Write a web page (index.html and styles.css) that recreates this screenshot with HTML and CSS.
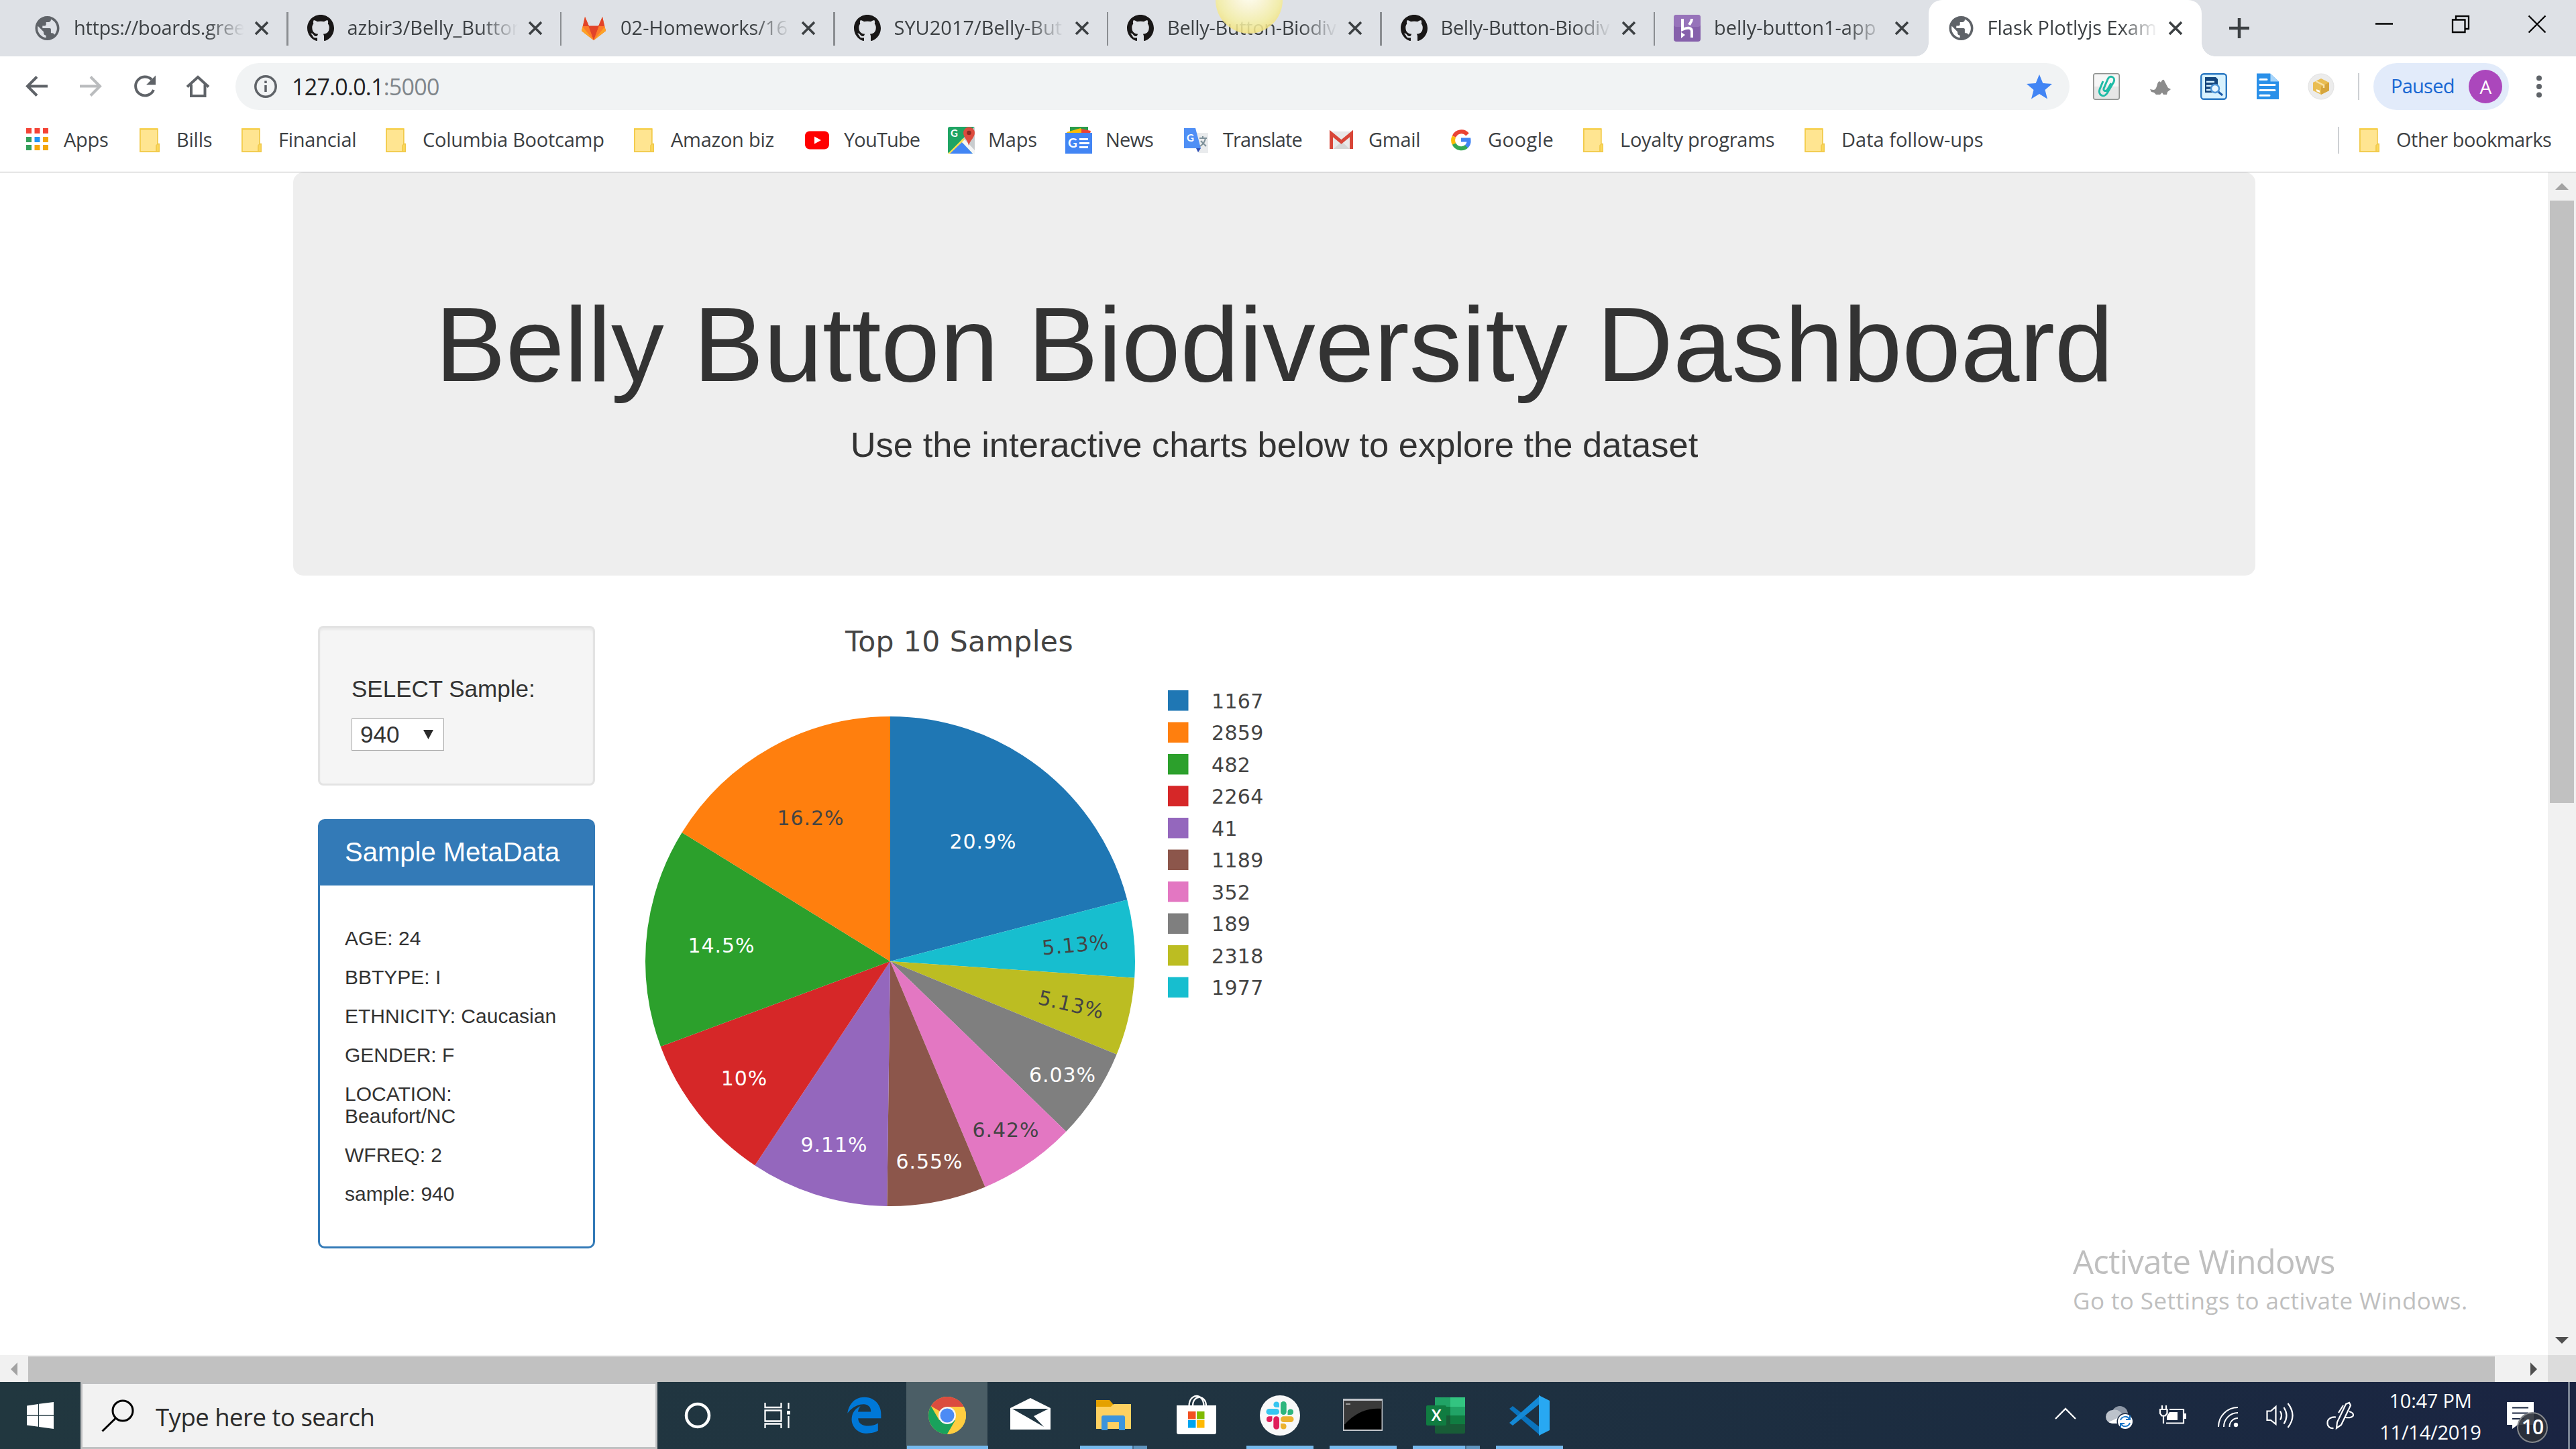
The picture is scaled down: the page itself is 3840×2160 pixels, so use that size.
FILE: index.html
```html
<!DOCTYPE html>
<html lang="en">
<head>
<meta charset="utf-8">
<title>Flask Plotlyjs Example</title>
<link rel="stylesheet" href="styles.css">
</head>
<body>
<svg class="defs" aria-hidden="true">
  <defs>
    <symbol id="globe" viewBox="0 0 40 40">
      <path transform="translate(-1.100 -1.600) scale(1.800)" fill="#5f6368" d="M12 2C6.480 2 2 6.480 2 12s4.480 10 10 10 10-4.480 10-10S17.520 2 12 2zm-1 17.930c-3.950-.49-7-3.850-7-7.930 0-.62.08-1.210.21-1.790L9 15v1c0 1.100.9 2 2 2v1.930zm6.900-2.540c-.26-.81-1-1.390-1.900-1.390h-1v-3c0-.55-.45-1-1-1H8v-2h2c.55 0 1-.45 1-1V7h2c1.100 0 2-.9 2-2v-.41c2.930 1.190 5 4.060 5 7.410 0 2.080-.8 3.970-2.100 5.390z"/>
    </symbol>
    <symbol id="github" viewBox="0 0 16 16">
      <path fill="#191717" d="M8 0C3.58 0 0 3.58 0 8c0 3.54 2.29 6.53 5.47 7.59.4.07.55-.17.55-.38 0-.19-.01-.82-.01-1.490-2.010.37-2.530-.49-2.690-.94-.09-.23-.48-.94-.82-1.130-.28-.15-.68-.52-.01-.53.63-.01 1.080.58 1.230.82.72 1.210 1.870.87 2.330.66.07-.52.28-.87.51-1.070-1.780-.2-3.640-.89-3.640-3.950 0-.87.31-1.590.82-2.150-.08-.2-.36-1.020.08-2.120 0 0 .67-.21 2.200.82.64-.18 1.320-.27 2-.27s1.360.09 2 .27c1.530-1.040 2.200-.82 2.200-.82.44 1.100.16 1.920.08 2.120.51.56.82 1.270.82 2.150 0 3.070-1.870 3.750-3.650 3.950.29.25.54.73.54 1.480 0 1.070-.01 1.930-.01 2.200 0 .21.15.46.55.38A8.010 8.010 0 0 0 16 8c0-4.420-3.580-8-8-8z"/>
    </symbol>
    <symbol id="close" viewBox="0 0 22 22">
      <path d="M2 2l18 18M20 2L2 20" stroke="#3c4043" stroke-width="3.600" fill="none"/>
    </symbol>
    <symbol id="folder" viewBox="0 0 40 40">
      <path d="M5 2h27.500v23H35v13H5z" fill="#fbd85c"/>
      <path d="M7 4.500h24V27l-2 3v6.500H7z" fill="#ffe591"/>
      <path d="M5.800 3.500h26v22h2.500v11.500H5.800zM30 37V27.500l2.500-2" fill="none" stroke="#f0c84a" stroke-width="1.400"/>
    </symbol>
  </defs>
</svg>

<div class="screen">
  <header class="tabstrip">
    <div class="tab"><svg class="fav"><use href="#globe"/></svg><span class="tab-title snug">https://boards.gree</span><svg class="tab-x"><use href="#close"/></svg></div>
    <div class="tab"><svg class="fav"><use href="#github"/></svg><span class="tab-title">azbir3/Belly_Button</span><svg class="tab-x"><use href="#close"/></svg></div>
    <div class="tab"><svg class="fav" viewBox="0 0 40 40"><path d="M20 38L2 24 7 3l6 14h14l6-14 5 21z" fill="#fc6d26"/><path d="M20 38L12 16.500h16z" fill="#e24329"/><path d="M20 38L2 24l2-7.500h8zM20 38l18-14-2-7.500h-8z" fill="#fc7b2a"/><path d="M20 38L2 24l1.500-6zM20 38l18-14-1.500-6z" fill="#fca326"/><path d="M4 17L7 3l6 14zM36 17L33 3l-6 14z" fill="#e24329"/></svg><span class="tab-title">02-Homeworks/16</span><svg class="tab-x"><use href="#close"/></svg></div>
    <div class="tab"><svg class="fav"><use href="#github"/></svg><span class="tab-title">SYU2017/Belly-But</span><svg class="tab-x"><use href="#close"/></svg></div>
    <div class="tab"><svg class="fav"><use href="#github"/></svg><span class="tab-title snug">Belly-Button-Biodiv</span><svg class="tab-x"><use href="#close"/></svg></div>
    <div class="tab"><svg class="fav"><use href="#github"/></svg><span class="tab-title snug">Belly-Button-Biodiv</span><svg class="tab-x"><use href="#close"/></svg></div>
    <div class="tab tab-last"><svg class="fav" viewBox="0 0 40 40"><rect width="40" height="40" rx="4" fill="#8660ab"/><rect width="40" height="18" rx="4" fill="#a381c5" opacity=".6"/><path d="M13 6v16c6-3 14-4 14 3v9M27 6c0 4-2 6-4 9" fill="none" stroke="#fff" stroke-width="4"/><path d="M11 26l6 4-6 5z" fill="#fff"/></svg><span class="tab-title">belly-button1-app</span><svg class="tab-x"><use href="#close"/></svg></div>
    <div class="tab tab-active"><svg class="fav"><use href="#globe"/></svg><span class="tab-title">Flask Plotlyjs Exam</span><svg class="tab-x"><use href="#close"/></svg></div>
    <svg class="newtab" viewBox="0 0 30 30"><path d="M15 0v30M0 15h30" stroke="#3c4043" stroke-width="4.500"/></svg>
    <div class="winbtns">
      <svg viewBox="0 0 26 26"><path d="M0 12.500h26" stroke="#000" stroke-width="2.500"/></svg>
      <svg viewBox="0 0 26 26"><path d="M1 6.500h18.500V25H1zM6 6V1.200h19V20h-5" fill="none" stroke="#000" stroke-width="2.300"/></svg>
      <svg viewBox="0 0 26 26"><path d="M.5.500l25 25M25.500.500l-25 25" stroke="#000" stroke-width="2.300"/></svg>
    </div>
    <div class="orb"></div>
  </header>

  <div class="toolbar">
    <svg class="nav" viewBox="0 0 80 90"><path d="M56 44.500H26M40 30.500l-14 14 14 14" fill="none" stroke="#5f6368" stroke-width="4"/></svg>
    <svg class="nav" viewBox="0 0 80 90"><path d="M24 44.500h30M40 30.500l14 14-14 14" fill="none" stroke="#babcbe" stroke-width="4"/></svg>
    <svg class="nav" viewBox="0 0 80 90"><path d="M54 50a14 14 0 1 1-3-15.500" fill="none" stroke="#5f6368" stroke-width="4"/><path d="M57 28.500v14H43z" fill="#5f6368"/></svg>
    <svg class="nav" viewBox="0 0 80 90"><path d="M24 45.500L40 31l16 14.500M30 42v17h20.500V42" fill="none" stroke="#5f6368" stroke-width="4"/></svg>
    <div class="omnibox">
      <svg class="info" viewBox="0 0 36 36"><circle cx="18" cy="18" r="15.200" fill="none" stroke="#5f6368" stroke-width="3.500"/><path d="M18 16v10M18 9.500v3.500" stroke="#5f6368" stroke-width="3.500"/></svg>
      <span class="url">127.0.0.1<span class="port">:5000</span></span>
      <svg class="star" viewBox="0 0 38 37"><path d="M19 0l5.300 13L38 14 27.500 23 31 36.500 19 29 7 36.500 10.500 23 0 14l13.700-1z" fill="#4285f4"/></svg>
    </div>
    <div class="exts">
      <svg viewBox="0 0 40 40"><rect x=".8" y=".8" width="38.400" height="38.400" rx="3" fill="#e6e6e6" stroke="#8f9290" stroke-width="1.600"/><rect x="2" y="2" width="36" height="18" fill="#f6f6f6"/><path d="M15 12l-5 12c-3 8 6 14 11 6l10-17c3-7-6-11-9-4l-6 14c-1 4 4 5 6 1l5-9" fill="none" stroke="#1fbba6" stroke-width="3"/></svg>
      <svg viewBox="0 0 40 40"><path d="M5 24l5 1c4 0 5-5 6-9 2-5 4-4 5-2 3-6 5-5 6-1 2 3 3 6 5 9l4 2-5 4-1 4h-5l-2-3-3 3h-6l-3-3-4-1z" fill="#8b8b8b"/></svg>
      <svg viewBox="0 0 40 40"><rect x="1.200" y="1.200" width="37.600" height="37.600" rx="4" fill="#d8f2fe" stroke="#2a78c2" stroke-width="2.400"/><path d="M7 6h16l3 3v20H7z" fill="#14457c"/><path d="M9 13h12M9 19h8M9 25h8" stroke="#d8f2fe" stroke-width="2.500"/><circle cx="22" cy="23" r="6" fill="#eaf7ff" stroke="#4d94d6" stroke-width="2.500"/><path d="M27 28l6 5" stroke="#1c5aa8" stroke-width="3"/></svg>
      <svg viewBox="0 0 40 40"><path d="M4 .500h20l13 12V39H4z" fill="#2a90e9"/><path d="M24.500.500l12.500 12H24.500z" fill="#a5d4fa"/><path d="M9 9.500h10M9 17.500h22M9 25.500h22M9 33.200h14" stroke="#fff" stroke-width="3" stroke-linecap="round"/></svg>
      <svg viewBox="0 0 40 40"><circle cx="20" cy="20" r="19" fill="#ececec" stroke="#e2e2e2"/><path d="M20 8l12 6v12l-12 6-12-6V14z" fill="#e9bd52"/><path d="M20 20v12l12-6V14z" fill="#d6a53c"/><path d="M12 12l12 6v4" fill="none" stroke="#f8e2a8" stroke-width="2.500"/><path d="M13 24l5 2v3l-5-2z" fill="#fff"/></svg>
    </div>
    <div class="vsep"></div>
    <div class="profile"><span>Paused</span><b class="avatar">A</b></div>
    <svg class="menu" viewBox="0 0 20 40"><circle cx="10" cy="7.500" r="4" fill="#5f6368"/><circle cx="10" cy="20" r="4" fill="#5f6368"/><circle cx="10" cy="32.500" r="4" fill="#5f6368"/></svg>
  </div>

  <nav class="bookmarks">
    <div class="bm"><svg viewBox="0 0 40 40"><path d="M4 2h8v8H4zM16.500 2h8v8h-8zM29 2h8v8h-8z" fill="#f44336"/><path d="M4 15h8v8H4zM4 27h8v8H4z" fill="#34a05a"/><path d="M16.500 15h8v8h-8z" fill="#2196f3"/><path d="M29 15h8v8h-8zM16.500 27h8v8h-8zM29 27h8v8h-8z" fill="#f4a70a"/></svg><span>Apps</span></div>
    <div class="bm"><svg><use href="#folder"/></svg><span>Bills</span></div>
    <div class="bm"><svg><use href="#folder"/></svg><span>Financial</span></div>
    <div class="bm"><svg><use href="#folder"/></svg><span>Columbia Bootcamp</span></div>
    <div class="bm"><svg><use href="#folder"/></svg><span>Amazon biz</span></div>
    <div class="bm tight"><svg viewBox="0 0 40 40"><rect x="2" y="6.500" width="36" height="27" rx="7" fill="#f00"/><path d="M16 14.500v11l10-5.500z" fill="#fff"/></svg><span>YouTube</span></div>
    <div class="bm"><svg viewBox="0 0 40 40"><rect width="40" height="40" rx="3" fill="#1fa463"/><path d="M20 20L40 0v40z" fill="#c9ccce"/><path d="M0 40L23 17l4 5L5 40z" fill="#ffdf4d"/><path d="M3 40l18-17 16 17z" fill="#4285f4"/><path d="M21 23l4-4 15 16v5h-3z" fill="#f5f5f5"/><path d="M31 28c-1-8-8-12-8-19a8 8 0 0 1 17 0c0 7-7 11-9 19z" fill="#dd4b3e"/><circle cx="31.500" cy="9" r="3.300" fill="#8a2a21"/><text x="4" y="15" class="g-sm">G</text></svg><span>Maps</span></div>
    <div class="bm tight"><svg viewBox="0 0 40 40"><path d="M7 0h27v8H7z" fill="#2a9c4a"/><path d="M2 8l21-6 4 8H3z" fill="#fbbc04"/><path d="M24 3l14 3-1 4H24z" fill="#ea4335"/><rect y="9" width="40" height="31" fill="#4285f4"/><text x="4" y="31" class="g-md">G</text><path d="M21 18.500h13M21 24.500h15M21 30.500h13" stroke="#fff" stroke-width="3"/></svg><span>News</span></div>
    <div class="bm tight"><svg viewBox="0 0 40 40"><path d="M17 9h21v30H24z" fill="#e9ebed"/><path d="M2 2h17l8 30H2z" fill="#4f8ff5"/><path d="M20 32h7l-4 6z" fill="#2f4fb5"/><path d="M25 17h11M30 14v3M34 17c-1 6-5 10-8 12M27 21l8 8" stroke="#7d9099" stroke-width="2" fill="none"/><text x="6" y="22" class="g-sm">G</text></svg><span>Translate</span></div>
    <div class="bm"><svg viewBox="0 0 40 40"><rect x="2" y="7" width="35" height="26" rx="2" fill="#e9e9e9"/><path d="M8 33l12-11 12 11z" fill="#d6d6d6"/><path d="M4.500 33V10L19.500 22.500 34.500 10v23" fill="none" stroke="#d84638" stroke-width="5"/></svg><span>Gmail</span></div>
    <div class="bm wide"><svg viewBox="0 0 40 40"><g fill="none" stroke-width="6"><path d="M29.500 11.500A12 12 0 0 0 9.500 14.500" stroke="#ea4335"/><path d="M9.500 14.500a12 12 0 0 0 0 11" stroke="#fbbc05"/><path d="M9.500 25.500a12 12 0 0 0 19 3.500" stroke="#34a853"/><path d="M28 29.500c3-3 4-6 3.500-10H20" stroke="#4285f4"/></g></svg><span>Google</span></div>
    <div class="bm"><svg><use href="#folder"/></svg><span>Loyalty programs</span></div>
    <div class="bm data"><svg><use href="#folder"/></svg><span>Data follow-ups</span></div>
    <div class="bm other"><svg><use href="#folder"/></svg><span>Other bookmarks</span></div>
  </nav>

  <div class="viewport">
    <main class="page">
      <section class="jumbotron">
        <h1>Belly Button Biodiversity Dashboard</h1>
        <p>Use the interactive charts below to explore the dataset</p>
      </section>
      <div class="row">
        <aside class="side">
          <div class="well">
            <h5>SELECT Sample:</h5>
            <div class="select"><span>940</span><svg viewBox="0 0 15 14"><path d="M0 0h15L7.500 14z" fill="#2b2b2b"/></svg></div>
          </div>
          <div class="panel">
            <h3>Sample MetaData</h3>
            <div class="panel-body">
              <h6>AGE: 24</h6><h6>BBTYPE: I</h6><h6>ETHNICITY: Caucasian</h6><h6>GENDER: F</h6><h6>LOCATION:<br>Beaufort/NC</h6><h6>WFREQ: 2</h6><h6>sample: 940</h6>
            </div>
          </div>
        </aside>
        <svg class="chart" viewBox="920 933 1000 907">
          <text class="chart-title" x="1430" y="970.500">Top 10 Samples</text>
          <g class="slices" transform="translate(1327 1433) rotate(-90)">
            <circle r="182.500" pathLength="100" stroke="#1f77b4" stroke-dasharray="20.950 100"/>
            <circle r="182.500" pathLength="100" stroke="#17becf" stroke-dasharray="5.130 100" stroke-dashoffset="-20.950"/>
            <circle r="182.500" pathLength="100" stroke="#bcbd22" stroke-dasharray="5.130 100" stroke-dashoffset="-26.080"/>
            <circle r="182.500" pathLength="100" stroke="#7f7f7f" stroke-dasharray="6.030 100" stroke-dashoffset="-31.210"/>
            <circle r="182.500" pathLength="100" stroke="#e377c2" stroke-dasharray="6.420 100" stroke-dashoffset="-37.240"/>
            <circle r="182.500" pathLength="100" stroke="#8c564b" stroke-dasharray="6.550 100" stroke-dashoffset="-43.660"/>
            <circle r="182.500" pathLength="100" stroke="#9467bd" stroke-dasharray="9.110 100" stroke-dashoffset="-50.210"/>
            <circle r="182.500" pathLength="100" stroke="#d62728" stroke-dasharray="10.020 100" stroke-dashoffset="-59.320"/>
            <circle r="182.500" pathLength="100" stroke="#2ca02c" stroke-dasharray="14.480 100" stroke-dashoffset="-69.340"/>
            <circle r="182.500" pathLength="100" stroke="#ff7f0e" stroke-dasharray="16.180 100" stroke-dashoffset="-83.820"/>
          </g>
          <g class="pct">
            <text x="1465.500" y="1265" class="lt">20.9%</text>
            <text x="1208.500" y="1230">16.2%</text>
            <text x="1075.500" y="1420" class="lt">14.5%</text>
            <text x="1109.500" y="1618" class="lt">10%</text>
            <text x="1243.500" y="1717" class="lt">9.11%</text>
            <text x="1385.500" y="1742" class="lt">6.55%</text>
            <text x="1499.500" y="1695">6.42%</text>
            <text x="1584" y="1613" class="lt">6.03%</text>
            <text transform="translate(1597 1497) rotate(13.100)" y="11">5.13%</text>
            <text transform="translate(1603 1408) rotate(-5.300)" y="11">5.13%</text>
          </g>
          <g class="legend">
            <rect x="1741" y="1029" width="30.500" height="30.500" fill="#1f77b4"/><text x="1806" y="1055.500">1167</text>
            <rect x="1741" y="1076.500" width="30.500" height="30.500" fill="#ff7f0e"/><text x="1806" y="1103">2859</text>
            <rect x="1741" y="1124" width="30.500" height="30.500" fill="#2ca02c"/><text x="1806" y="1150.500">482</text>
            <rect x="1741" y="1171.500" width="30.500" height="30.500" fill="#d62728"/><text x="1806" y="1198">2264</text>
            <rect x="1741" y="1219" width="30.500" height="30.500" fill="#9467bd"/><text x="1806" y="1245.500">41</text>
            <rect x="1741" y="1266.500" width="30.500" height="30.500" fill="#8c564b"/><text x="1806" y="1293">1189</text>
            <rect x="1741" y="1314" width="30.500" height="30.500" fill="#e377c2"/><text x="1806" y="1340.500">352</text>
            <rect x="1741" y="1361.500" width="30.500" height="30.500" fill="#7f7f7f"/><text x="1806" y="1388">189</text>
            <rect x="1741" y="1409" width="30.500" height="30.500" fill="#bcbd22"/><text x="1806" y="1435.500">2318</text>
            <rect x="1741" y="1456.500" width="30.500" height="30.500" fill="#17becf"/><text x="1806" y="1483">1977</text>
          </g>
        </svg>
      </div>
    </main>
    <div class="vscroll">
      <svg viewBox="0 0 42 42"><path d="M11 26h20L21 16z" fill="#a3a3a3"/></svg>
      <div class="vthumb"></div>
      <svg class="down" viewBox="0 0 42 42"><path d="M11 17h20L21 27z" fill="#505050"/></svg>
    </div>
    <div class="watermark"><div class="wm1">Activate Windows</div><div class="wm2">Go to Settings to activate Windows.</div></div>
  </div>
  <div class="hscroll">
    <svg viewBox="0 0 42 40"><path d="M26 11v20L16 21z" fill="#a3a3a3"/></svg>
    <div class="hthumb"></div>
    <svg class="right" viewBox="0 0 42 40"><path d="M16 11v20l10-10z" fill="#505050"/></svg>
    <div class="corner"></div>
  </div>

  <footer class="taskbar">
    <div class="start"><svg viewBox="0 0 40 40"><path d="M0 5.500L17 3v16H0zM18 2.800L40 0v19H18zM0 20.500h17v16.300L0 34.500zM18 20.500h22V40l-22-3z" fill="#fff"/></svg></div>
    <div class="search"><svg viewBox="0 0 52 50"><circle cx="32" cy="18" r="15" fill="none" stroke="#000" stroke-width="3"/><path d="M21.500 29L1.500 48.500" stroke="#000" stroke-width="3"/></svg><span>Type here to search</span></div>
    <div class="cell cortana"><svg viewBox="0 0 64 64"><circle cx="32" cy="32" r="17" fill="none" stroke="#fff" stroke-width="4.500"/></svg></div>
    <div class="cell taskview"><svg viewBox="0 0 64 64"><path d="M9.500 13v7h24v-7M9.500 51v-6.500h24V51M9.500 24.500h24v16h-24zM44.500 13v9M44.500 33v18" fill="none" stroke="#fff" stroke-width="2.300"/><rect x="42" y="25" width="5" height="5.500" fill="#fff"/></svg></div>
    <div class="cell"><svg viewBox="0 0 64 64"><path transform="translate(4.500 4) scale(.1087)" fill="#0078d7" d="M25.714 228.163c.111-.162.23-.323.342-.485-.021.162-.045.323-.065.485h-.277zm460.572 15.508c0-44.032-7.754-84.465-28.801-122.405C416.498 47.879 343.912 8.001 258.893 8.001 118.962 7.724 40.617 113.214 26.056 227.679c42.429-61.312 117.073-121.376 220.375-124.966 0 0 109.666 0 99.419 104.957H169.997c6.369-37.386 18.554-58.986 34.339-78.926-75.048 34.900-121.850 96.096-120.742 188.315.83 71.448 50.124 144.836 120.743 171.976 83.357 31.847 192.776 7.200 240.132-21.324V363.307c-80.864 56.494-270.871 60.925-272.255-67.572h314.073v-52.064z"/></svg></div>
    <div class="cell on current"><svg viewBox="0 0 64 64"><circle cx="32" cy="32" r="28" fill="#ffcd40"/><path d="M32 32L7.800 18a28 28 0 0 1 48.400 0z" fill="#db4c3f"/><path d="M7.800 18A28 28 0 0 0 32 60l12-21L20 39z" fill="#19a25c"/><path d="M32 19h24.800A28 28 0 0 1 32 60l12.500-21z" fill="#ffcd40"/><path d="M32 19H56.500L50 10 32 4z" fill="#db4c3f"/><circle cx="32" cy="32" r="13" fill="#f4f4f4"/><circle cx="32" cy="32" r="10.500" fill="#4c8bf5"/></svg></div>
    <div class="cell"><svg viewBox="0 0 64 64"><path d="M2 21L32 6l30 15v32H2z" fill="#fff"/><path d="M5 22h54L37 33l15 16z" fill="#203541"/></svg></div>
    <div class="cell on multi"><svg viewBox="0 0 64 64"><path d="M6 9h20l5 6v9H6z" fill="#e5a100"/><path d="M6 19h22l4-4h26v37H6z" fill="#fed161"/><path d="M14 54V35a3 3 0 0 1 3-3h29a3 3 0 0 1 3 3v19h-9V42H23v12z" fill="#3c94dd"/></svg></div>
    <div class="cell"><svg viewBox="0 0 64 64"><path d="M20.500 18c0-20 22-20 22 0M26 18c0-18 20-17 20 0" fill="none" stroke="#fff" stroke-width="2.300"/><path d="M2 17h59v40q0 3-3 3H5q-3 0-3-3z" fill="#fff"/><path d="M19 26h11.500v11.500H19z" fill="#f25022"/><path d="M32 26h11.500v11.500H32z" fill="#7fba00"/><path d="M19 39h11.500v11.500H19z" fill="#00a4ef"/><path d="M32 39h11.500v11.500H32z" fill="#ffb900"/></svg></div>
    <div class="cell on"><svg viewBox="0 0 64 64"><circle cx="32" cy="32" r="30" fill="#f8f8f8"/><g fill="#36c5f0"><rect x="11.500" y="22" width="19.500" height="8.700" rx="4.300"/><path d="M31 20h-5a4.300 4.300 0 1 1 5-4.300z"/></g><g fill="#2eb67d"><rect x="33" y="11" width="8.700" height="20" rx="4.300"/><path d="M43.500 31v-5a4.300 4.300 0 1 1 4.300 5z"/></g><g fill="#ecb22e"><rect x="33" y="33.300" width="19.500" height="8.700" rx="4.300"/><path d="M33 44h5a4.300 4.300 0 1 1-5 4.300z"/></g><g fill="#e01e5a"><rect x="22.300" y="33.300" width="8.700" height="19.500" rx="4.300"/><path d="M20.500 33.300v5a4.300 4.300 0 1 1-4.300-5z"/></g></svg></div>
    <div class="cell on"><svg viewBox="0 0 64 64"><rect x="2" y="7" width="59" height="48" fill="#c3c7cc"/><rect x="3.500" y="10" width="56" height="43" fill="#000"/><path d="M3.500 10h56v12C36 20 18 30 5 45H3.500z" fill="#3a3a3a"/><path d="M6 15h7" stroke="#bbb" stroke-width="1.500"/></svg></div>
    <div class="cell on multi"><svg viewBox="0 0 64 64"><rect x="15" y="5" width="45" height="54" rx="2" fill="#185c37"/><path d="M15 5h23v14H15z" fill="#21a366"/><path d="M38 5h22v14H38z" fill="#33c481"/><path d="M15 19h23v13H15z" fill="#107c41"/><path d="M38 19h22v13H38z" fill="#21a366"/><path d="M38 32h22v13H38z" fill="#107c41"/><rect x="2" y="17" width="30" height="30" rx="2" fill="#107c41"/><text x="17" y="40" class="xl">X</text></svg></div>
    <div class="cell on"><svg viewBox="0 0 64 64"><path d="M2 22l5-4 41 32v12z" fill="#0a73bd"/><path d="M2 43l5 4 41-33V2z" fill="#1489d6"/><path d="M46 2l16 8v44l-16 8z" fill="#28a8f2"/></svg></div>

    <div class="tray">
      <svg viewBox="0 0 80 100"><path d="M25 55l15-15 15 15" fill="none" stroke="#fff" stroke-width="2.300"/></svg>
      <svg viewBox="0 0 80 100"><circle cx="41" cy="48" r="12" fill="#8d97a6"/><path d="M30 62a10 10 0 0 1 0-20c7-2 12 2 15 7v13z" fill="#bcc2cb"/><path d="M24 60l20-9v11H30z" fill="#fff"/><circle cx="49" cy="59" r="12.500" fill="#1b2a42"/><circle cx="49" cy="59" r="11" fill="#fff"/><path d="M42 57c2-6 10-7 13-2m1-5v6h-6M56 61c-2 6-10 7-13 2m-1 5v-6h6" fill="none" stroke="#1976c9" stroke-width="2"/></svg>
      <svg viewBox="0 0 80 100"><path d="M24 35v6M30 35v6M21 41h10.500v6l-3 3.500h-5L21 47zM26 50v12M35 41h21v20.500H30" fill="none" stroke="#fff" stroke-width="2.200"/><path d="M35 45h12v12H31v-6z" fill="#fff"/><path d="M56 47h4v8h-4z" fill="#fff"/></svg>
      <svg viewBox="0 0 80 100"><path d="M28 67a29 29 0 0 1 29-29M36 67a21 21 0 0 1 21-21M44.500 67A12.500 12.500 0 0 1 57 54" fill="none" stroke="#fff" stroke-width="2"/><circle cx="54" cy="64" r="3.200" fill="#fff"/></svg>
      <svg viewBox="0 0 80 100"><path d="M20.500 43.500H26l7.500-6.500v26L26 57h-5.500zM40 43.500q4 6.500 0 13M45.500 38q8 12 0 24.500M51.500 32q14 18 0 36" fill="none" stroke="#fff" stroke-width="2.200"/></svg>
      <svg viewBox="0 0 80 100"><path d="M58 33l5-2 2 4-14 29-7 5 1-9zM47 46l7-11M43 52.500c-7-1-13 3-12.500 9 0 5 4 8 9 7.500M57.500 53c7 1 12-1 11.500-4 0-3-3-4-6-5" fill="none" stroke="#fff" stroke-width="2.200"/></svg>
    </div>
    <div class="clock"><div>10:47 PM</div><div>11/14/2019</div></div>
    <div class="action"><svg viewBox="0 0 40 40"><path d="M0 0h40v34H16l-8 6v-6H0z" fill="#fff"/><path d="M8 8.500h24M8 16.500h24M8 25h18" stroke="#1b2741" stroke-width="2.200"/></svg><span class="count">10</span></div>
    <div class="peek"></div>
  </footer>
</div>
</body>
</html>
```

FILE: styles.css
```css
* { box-sizing: border-box; }
body { margin: 0; background: #fff; }
svg { display: block; flex: none; overflow: visible; }
.defs { position: absolute; width: 0; height: 0; }

.screen {
  width: 3840px;
  height: 2160px;
  overflow: hidden;
  display: flex;
  flex-direction: column;
  font-family: "Open Sans", "Noto Sans", sans-serif;
  font-size: 29px;
  letter-spacing: -0.25px;
  color: #3c4043;
}

/* Tab strip */
.tabstrip {
  position: relative;
  height: 84px;
  flex: none;
  display: flex;
  align-items: center;
  padding-left: 22px;
  background: #dee1e6;
}
.tab {
  position: relative;
  width: 407.5px;
  height: 84px;
  flex: none;
  display: flex;
  align-items: center;
  padding-left: 28px;
}
.tab::after {
  content: "";
  width: 2.5px;
  height: 50px;
  margin: 2px 0 0 auto;
  background: #8a8d91;
}
.tab-last::after { visibility: hidden; }
.fav { width: 40px; height: 40px; margin-right: 20px; }
.tab-title {
  width: 254px;
  flex: none;
  margin: 0 15px 3px 0;
  white-space: nowrap;
  letter-spacing: 0;
  -webkit-mask-image: linear-gradient(90deg, #000 78%, transparent 100%);
  mask-image: linear-gradient(90deg, #000 78%, transparent 100%);
}
.snug { letter-spacing: -0.35px; }
.tab-x { width: 22px; height: 22px; }
.tab-active { background: #fff; border-radius: 20px 20px 0 0; }
.tab-active::before, .tab-active::after {
  content: "";
  position: absolute;
  bottom: 0;
  width: 20px;
  height: 20px;
  margin: 0;
}
.tab-active::before { left: -20px; background: radial-gradient(circle at 0 0, transparent 19.5px, #fff 20px); }
.tab-active::after { right: -20px; background: radial-gradient(circle at 100% 0, transparent 19.5px, #fff 20px); }
.newtab { width: 30px; height: 30px; margin-left: 41px; }
.winbtns { display: flex; gap: 88px; margin: 0 45px 12px auto; }
.winbtns svg { width: 26px; height: 26px; }
.orb {
  position: absolute;
  left: 1812px;
  top: -50px;
  width: 100px;
  height: 100px;
  border-radius: 50%;
  background: radial-gradient(circle at 50% 40%, #fffef6 0, #fbf6d2e6 30%, #f5efa2d9 60%, #f1da6ce0 88%, #f0c650cc 100%);
}

/* Toolbar */
.toolbar {
  height: 90px;
  flex: none;
  display: flex;
  align-items: center;
  padding-left: 15px;
}
.nav { width: 80px; height: 90px; }
.omnibox {
  width: 2734px;
  height: 70px;
  margin: 0 15px 0 16px;
  padding: 0 26px 0 27px;
  border-radius: 35px;
  background: #f1f3f4;
  display: flex;
  align-items: center;
}
.info { width: 36px; height: 36px; }
.url {
  margin: 0 auto 0 21px;
  font-size: 34px;
  letter-spacing: -0.75px;
  color: #202124;
}
.port { color: #80868b; }
.star { width: 38px; height: 37px; }
.exts { display: flex; }
.exts svg { width: 40px; height: 40px; margin: 0 20px; }
.vsep { width: 2px; height: 40px; margin: 0 21px 0 15px; background: #cdd0d3; }
.profile {
  width: 202px;
  height: 70px;
  padding: 0 10px 0 26px;
  border-radius: 35px;
  background: #e2ebfa;
  color: #1967d2;
  display: flex;
  align-items: center;
  justify-content: space-between;
  letter-spacing: -0.75px;
}
.profile span { margin-bottom: 3px; }
.avatar {
  width: 50px;
  height: 50px;
  border-radius: 50%;
  background: #ab47bc;
  color: #fff;
  font-weight: 400;
  font-size: 28px;
  line-height: 50px;
  text-align: center;
}
.menu { width: 20px; height: 40px; margin-left: 35px; }

/* Bookmarks */
.bookmarks {
  height: 83px;
  flex: none;
  display: grid;
  grid-template-columns: 168px 152px 215px 370px 258px 215px 175px 175px 217px 178px 197px 330px 827px 1fr;
  padding: 0 0 12px 35px;
  align-items: center;
  border-bottom: 1px solid #b4b5b6;
}
.bm { display: flex; align-items: center; gap: 20px; white-space: nowrap; }
.bm svg { width: 40px; height: 40px; }
.bm span { margin-bottom: 3px; }
.tight { letter-spacing: -0.85px; }
.wide { letter-spacing: 0.5px; }
.data { letter-spacing: 0; }
.data::after { content: ""; width: 2px; height: 40px; margin: 0 25px 0 auto; background: #cdd0d3; }
.other { letter-spacing: -0.45px; }
.g-sm, .g-md { font-family: Lato, sans-serif; font-weight: 700; font-size: 15px; fill: #fff; letter-spacing: 0; }
.g-md { font-size: 19px; }

/* Page viewport */
.viewport { position: relative; height: 1763px; flex: none; display: flex; overflow: hidden; }
.page {
  width: 3798px;
  flex: none;
  font-family: "Liberation Sans", Arial, sans-serif;
  color: #333;
  letter-spacing: 0;
}
.jumbotron {
  width: 2925px;
  height: 601px;
  margin-left: 437px;
  padding-top: 170px;
  border-radius: 15px;
  background: #eee;
  text-align: center;
}
h1, h3, h5, h6, p { margin: 0; font-weight: 400; }
h1 { font-size: 157.5px; line-height: 173px; letter-spacing: -0.06px; }
.jumbotron p { margin-top: 33px; font-size: 52.5px; line-height: 60px; }
.row { display: flex; gap: 33px; margin: 75px 0 0 474px; }
.side { width: 413px; }
.well {
  height: 238px;
  padding: 71px 0 0 47px;
  border: 3px solid #e3e3e3;
  border-radius: 8px;
  background: #f5f5f5;
  box-shadow: inset 0 3px 3px rgba(0, 0, 0, .05);
}
.well h5 { font-size: 35px; line-height: 38px; padding-top: 1px; }
.select {
  width: 138px;
  height: 48px;
  margin-top: 25px;
  padding: 0 15px 0 12px;
  border: 1px solid #a6a6a6;
  background: #fff;
  display: flex;
  align-items: center;
  justify-content: space-between;
  font-size: 35px;
  line-height: 46px;
}
.select svg { width: 15px; height: 14px; }
.panel {
  height: 640px;
  margin-top: 50px;
  border: 3px solid #337ab7;
  border-radius: 10px;
  background: #fff;
}
.panel h3 {
  height: 96px;
  padding-left: 37px;
  background: #337ab7;
  color: #fff;
  font-size: 40px;
  line-height: 93px;
}
.panel-body { padding: 62px 0 0 37px; }
.panel-body h6 { font-size: 30px; line-height: 33px; margin-bottom: 25px; }

/* Pie chart */
.chart { width: 1000px; height: 907px; font-family: "DejaVu Sans", Verdana, sans-serif; font-size: 30px; fill: #444; }
.chart-title { font-size: 42.5px; text-anchor: middle; letter-spacing: 0.4px; }
.slices circle { fill: none; stroke-width: 365; }
.pct text { text-anchor: middle; letter-spacing: 0.9px; }
.pct .lt { fill: #fff; }
.legend text { letter-spacing: 0.3px; }

/* Scrollbars */
.vscroll { width: 42px; background: #f1f1f1; display: flex; flex-direction: column; }
.vscroll svg { width: 42px; height: 42px; }
.vthumb { height: 898px; margin: 0 3px; background: #c1c1c1; }
.vscroll .down { margin-top: auto; margin-bottom: 2px; }
.hscroll { height: 40px; flex: none; display: flex; background: #f1f1f1; }
.hscroll svg { width: 42px; height: 40px; }
.hthumb { width: 3677px; height: 38px; margin-top: 2px; background: #c1c1c1; }
.hscroll .right { margin-left: auto; }
.corner { width: 42px; background: #dcdcdc; }

/* Activation notice floating over the page */
.watermark {
  position: absolute;
  left: 3090px;
  top: 1588px;
  color: #bfbfbf;
  white-space: nowrap;
}
.wm1 { font-size: 49px; line-height: 70px; letter-spacing: -0.72px; }
.wm2 { font-size: 35px; line-height: 46px; letter-spacing: 0.43px; padding-top: 1px; }

/* Taskbar */
.taskbar {
  height: 100px;
  flex: none;
  display: flex;
  background: linear-gradient(90deg, #21373f 0%, #203441 45%, #1b2b40 80%, #1a2442 100%);
}
.start { width: 120px; display: flex; align-items: center; padding-left: 40px; }
.start svg { width: 40px; height: 40px; }
.search {
  width: 860px;
  border: 3px solid #c0c1c2;
  background: #f2f2f2;
  display: flex;
  align-items: center;
  padding-left: 28px;
  color: #2b2b2b;
  font-size: 36.5px;
  letter-spacing: -0.5px;
}
.search svg { width: 52px; height: 50px; }
.search span { margin: 3px 0 0 29px; }
.cell {
  position: relative;
  width: 124px;
  display: flex;
  align-items: center;
  justify-content: center;
}
.cell svg { width: 64px; height: 64px; }
.cortana { width: 120px; }
.taskview { width: 126px; }
.on::after {
  content: "";
  position: absolute;
  left: 12px;
  right: 12px;
  bottom: 0;
  height: 5px;
  background: #76b9ed;
}
.multi::after { background: linear-gradient(90deg, #76b9ed 78%, #456e8f 78%, #456e8f 80%, #5f94be 80%); }
.current { background: linear-gradient(#4b5e66, #4b5e66) 1px 0 / 121px 100% no-repeat; }
.current::after { left: 2px; right: 1px; }
.xl { fill: #fff; font: 700 22px Lato, sans-serif; text-anchor: middle; }
.tray { display: flex; margin-left: auto; }
.tray svg { width: 80px; height: 100px; }
.clock {
  width: 168px;
  margin: 4px 0 0 20px;
  color: #fff;
  line-height: 47px;
  text-align: center;
}
.action { position: relative; width: 121px; padding: 30px 0 0 30px; }
.action svg { width: 40px; height: 40px; }
.count {
  position: absolute;
  left: 45px;
  top: 45px;
  width: 46px;
  height: 46px;
  border: 2px solid #85888c;
  border-radius: 50%;
  background: #2b3038e6;
  color: #fff;
  font-size: 30px;
  font-weight: 600;
  line-height: 40px;
  text-align: center;
  letter-spacing: -1px;
}
.peek { width: 12px; border-left: 3px solid #7a8494; }
```
